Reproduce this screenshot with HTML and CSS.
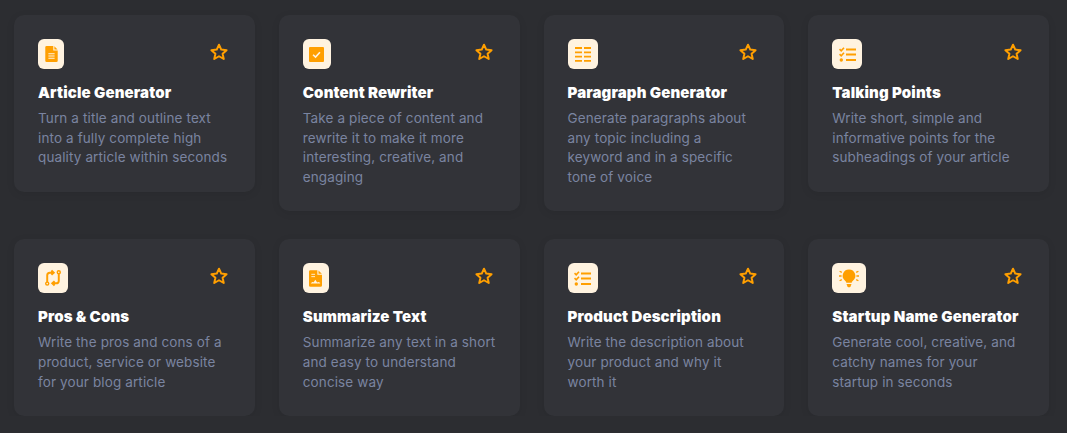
FILE: index.html
```html
<!DOCTYPE html>
<html lang="en">
<head>
    <meta charset="UTF-8">
    <meta name="viewport" content="width=device-width, initial-scale=1.0">
    <title>Templates</title>
    <link rel="stylesheet" href="styles.css">
</head>
<body>
    <div class="tools">

        <div class="card">
            <div class="card-top">
                <div class="icon icon-26">
                    <svg width="13" height="16" viewBox="0 0 14 18"><path d="M1.5 0H9V5H14V16.5A1.5 1.5 0 0 1 12.5 18H1.5A1.5 1.5 0 0 1 0 16.5V1.5A1.5 1.5 0 0 1 1.5 0Z" fill="#ff9f00"/><path d="M10.2 0.3L13.8 3.9H10.2Z" fill="#ff9f00"/><path d="M3.5 8.8H10.5M3.5 11.3H10.5M3.5 13.8H10.5" stroke="#fff3e0" stroke-width="1.2"/></svg>
                </div>
                <svg class="star" viewBox="0 0 24 24"><path d="M12 3.2l2.7 5.9 6.4.7-4.8 4.3 1.4 6.3L12 17.1l-5.7 3.3 1.4-6.3-4.8-4.3 6.4-.7z"/></svg>
            </div>
            <h3>Article Generator</h3>
            <p>Turn a title and outline text into a fully complete high quality article within seconds</p>
        </div>

        <div class="card">
            <div class="card-top">
                <div class="icon icon-28">
                    <svg width="15" height="15" viewBox="0 0 14 14"><rect width="14" height="14" rx="1" fill="#ff9f00"/><path d="M3.8 7.2L6.1 9.4L10.2 4.9" fill="none" stroke="#fff3e0" stroke-width="1.5"/></svg>
                </div>
                <svg class="star" viewBox="0 0 24 24"><path d="M12 3.2l2.7 5.9 6.4.7-4.8 4.3 1.4 6.3L12 17.1l-5.7 3.3 1.4-6.3-4.8-4.3 6.4-.7z"/></svg>
            </div>
            <h3>Content Rewriter</h3>
            <p>Take a piece of content and rewrite it to make it more interesting, creative, and engaging</p>
        </div>

        <div class="card">
            <div class="card-top">
                <div class="icon icon-30">
                    <svg width="16" height="15" viewBox="0 0 16 15"><path d="M0 1H7M0 5.3H7M0 9.6H7M0 13.9H7M9 1H16M9 5.3H16M9 9.6H16M9 13.9H16" stroke="#ff9f00" stroke-width="1.8"/></svg>
                </div>
                <svg class="star" viewBox="0 0 24 24"><path d="M12 3.2l2.7 5.9 6.4.7-4.8 4.3 1.4 6.3L12 17.1l-5.7 3.3 1.4-6.3-4.8-4.3 6.4-.7z"/></svg>
            </div>
            <h3>Paragraph Generator</h3>
            <p>Generate paragraphs about any topic including a keyword and in a specific tone of voice</p>
        </div>

        <div class="card">
            <div class="card-top">
                <div class="icon icon-30">
                    <svg width="17" height="15" viewBox="0 0 17 15"><path d="M0.5 2.2L2.2 3.8L5 0.8M0.5 7.2L2.2 8.8L5 5.8" fill="none" stroke="#ff9f00" stroke-width="1.6"/><circle cx="2.3" cy="13" r="1.7" fill="#ff9f00"/><path d="M7 2.5H17M7 7.5H17M7 13H17" stroke="#ff9f00" stroke-width="2"/></svg>
                </div>
                <svg class="star" viewBox="0 0 24 24"><path d="M12 3.2l2.7 5.9 6.4.7-4.8 4.3 1.4 6.3L12 17.1l-5.7 3.3 1.4-6.3-4.8-4.3 6.4-.7z"/></svg>
            </div>
            <h3>Talking Points</h3>
            <p>Write short, simple and informative points for the subheadings of your article</p>
        </div>

        <div class="card">
            <div class="card-top">
                <div class="icon icon-30">
                    <svg width="16" height="18" viewBox="0 0 18 18" fill="none" stroke="#ff9f00"><circle cx="2.5" cy="15.3" r="1.7" stroke-width="1.6"/><circle cx="15.5" cy="2.5" r="1.7" stroke-width="1.6"/><path d="M2.5 13.5V6Q2.5 3 5.5 3H9.5M7.2 0.6L9.8 3L7.2 5.4M15.5 4.5V12Q15.5 15 12.5 15H8.5M10.8 12.6L8.2 15L10.8 17.4" stroke-width="2.2"/></svg>
                </div>
                <svg class="star" viewBox="0 0 24 24"><path d="M12 3.2l2.7 5.9 6.4.7-4.8 4.3 1.4 6.3L12 17.1l-5.7 3.3 1.4-6.3-4.8-4.3 6.4-.7z"/></svg>
            </div>
            <h3>Pros &amp; Cons</h3>
            <p>Write the pros and cons of a product, service or website for your blog article</p>
        </div>

        <div class="card">
            <div class="card-top">
                <div class="icon icon-26">
                    <svg width="13" height="17" viewBox="0 0 14 18"><path d="M1.5 0H9V5H14V16.5A1.5 1.5 0 0 1 12.5 18H1.5A1.5 1.5 0 0 1 0 16.5V1.5A1.5 1.5 0 0 1 1.5 0Z" fill="#ff9f00"/><path d="M10.2 0.3L13.8 3.9H10.2Z" fill="#ff9f00"/><path d="M2.5 4.5H6.5M2.5 7H6.5" stroke="#fff3e0" stroke-width="1"/><path d="M2 14.5H12V13.6L10 12.8L8.8 13.2L6.8 10.3L5 13L3.5 12.9L2 14Z" fill="#fff3e0"/></svg>
                </div>
                <svg class="star" viewBox="0 0 24 24"><path d="M12 3.2l2.7 5.9 6.4.7-4.8 4.3 1.4 6.3L12 17.1l-5.7 3.3 1.4-6.3-4.8-4.3 6.4-.7z"/></svg>
            </div>
            <h3>Summarize Text</h3>
            <p>Summarize any text in a short and easy to understand concise way</p>
        </div>

        <div class="card">
            <div class="card-top">
                <div class="icon icon-30">
                    <svg width="17" height="15" viewBox="0 0 17 15"><path d="M0.5 2.2L2.2 3.8L5 0.8M0.5 7.2L2.2 8.8L5 5.8" fill="none" stroke="#ff9f00" stroke-width="1.6"/><circle cx="2.3" cy="13" r="1.7" fill="#ff9f00"/><path d="M7 2.5H17M7 7.5H17M7 13H17" stroke="#ff9f00" stroke-width="2"/></svg>
                </div>
                <svg class="star" viewBox="0 0 24 24"><path d="M12 3.2l2.7 5.9 6.4.7-4.8 4.3 1.4 6.3L12 17.1l-5.7 3.3 1.4-6.3-4.8-4.3 6.4-.7z"/></svg>
            </div>
            <h3>Product Description</h3>
            <p>Write the description about your product and why it worth it</p>
        </div>

        <div class="card">
            <div class="card-top">
                <div class="icon icon-34">
                    <svg width="20" height="19" viewBox="0 0 20 19"><path d="M10 0.5A6.3 6.3 0 0 1 13.7 11.9C13 12.4 12.7 13 12.7 13.8H7.3C7.3 13 7 12.4 6.3 11.9A6.3 6.3 0 0 1 10 0.5Z" fill="#ff9f00"/><path d="M7.5 15H12.5L11.5 17.8Q10 18.8 8.5 17.8Z" fill="#ff9f00"/><path d="M0 7H2.6M17.4 7H20M0.6 2.2L2.8 3.4M19.4 2.2L17.2 3.4M0.6 11.8L2.8 10.6M19.4 11.8L17.2 10.6" stroke="#ff9f00" stroke-width="1.3"/></svg>
                </div>
                <svg class="star" viewBox="0 0 24 24"><path d="M12 3.2l2.7 5.9 6.4.7-4.8 4.3 1.4 6.3L12 17.1l-5.7 3.3 1.4-6.3-4.8-4.3 6.4-.7z"/></svg>
            </div>
            <h3>Startup Name Generator</h3>
            <p>Generate cool, creative, and catchy names for your startup in seconds</p>
        </div>

    </div>
</body>
</html>
```

FILE: styles.css
```css
body {
    margin: 0;
    background-color: #2c2d31;
    font-family: Inter, "Open Sans", sans-serif;
    overflow: hidden;
}

.tools {
    display: grid;
    grid-template-columns: repeat(4, 1fr);
    column-gap: 24px;
    row-gap: 28px;
    align-items: start;
    padding: 15px 18px 0 14px;
}

.card {
    padding: 24px;
    background: #323338;
    border-radius: 10px;
    box-shadow: 0 2px 8px rgba(0, 0, 0, 0.08);
}

.card-top {
    display: flex;
    justify-content: space-between;
    align-items: center;
    height: 30px;
}

.icon {
    display: flex;
    justify-content: center;
    align-items: center;
    height: 30px;
    background: #fff3e0;
    border-radius: 6px;
}

.icon-26 { width: 26px; }
.icon-28 { width: 28px; }
.icon-30 { width: 30px; }
.icon-34 { width: 34px; }

.star {
    width: 20px;
    height: 20px;
    margin-top: -4px;
    margin-right: 2px;
    fill: none;
    stroke: #ff9f00;
    stroke-width: 2.4;
    stroke-linejoin: round;
}

.card h3 {
    margin: 13px 0 0;
    color: #fff;
    font-size: 15px;
    font-weight: 900;
    line-height: 22px;
    letter-spacing: 0.15px;
}

.card p {
    margin: 5.05px 0 0;
    color: #7a84a0;
    font-size: 13.5px;
    line-height: 19.6px;
    letter-spacing: 0.12px;
}
```
